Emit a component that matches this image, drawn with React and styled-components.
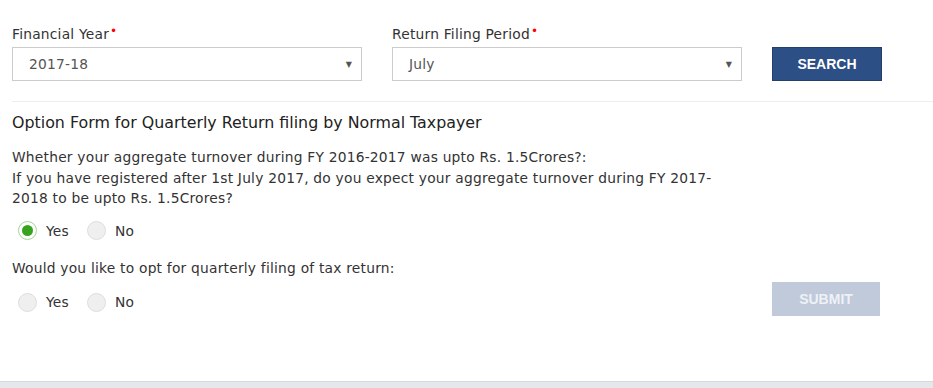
import React from 'react'
import styled, { createGlobalStyle } from 'styled-components'

const GlobalStyle = createGlobalStyle`
  * { box-sizing: border-box; }
  body {
    margin: 0;
    background: #fff;
    font-family: "DejaVu Sans", Verdana, sans-serif;
    color: #333;
  }
`;

const Page = styled.div`
  width: 933px;
  height: 388px;
  display: flex;
  flex-direction: column;
  overflow: hidden;
`;

const Content = styled.div`
  flex: 1;
  padding: 22px 0 0 12px;
`;

const FilterRow = styled.div`
  display: grid;
  grid-template-columns: 350px 350px 110px;
  column-gap: 30px;
  align-items: end;
`;

const Field = styled.div`
  display: flex;
  flex-direction: column;
  gap: 4px;
`;

const Label = styled.label`
  font-size: 13.8px;
  letter-spacing: 0.22px;
  line-height: 18px;
  color: #333;
`;

const Required = styled.span`
  color: #f00;
  font-size: 12px;
  vertical-align: 4px;
  margin-left: 1px;
  &::before { content: "•"; }
`;

const SelectBox = styled.div`
  height: 34px;
  border: 1px solid #ccc;
  display: flex;
  align-items: center;
  justify-content: space-between;
  padding: 0 9px 0 16px;
  font-size: 13.8px;
  letter-spacing: 0.22px;
  color: #555;
  background: #fff;
`;

const Caret = styled.span`
  font-size: 8px;
  color: #555;
`;

const Button = styled.button`
  height: 34px;
  width: ${({ $w }) => $w || 110}px;
  border-radius: 0;
  background: ${({ disabled }) => (disabled ? '#c0cadb' : '#2c4f85')};
  border: 1px solid ${({ disabled }) => (disabled ? '#c0cadb' : '#253f6a')};
  color: ${({ disabled }) => (disabled ? '#eef1f6' : '#fff')};
  font-family: "Liberation Sans", Arial, sans-serif;
  font-weight: bold;
  font-size: 14px;
  cursor: pointer;
`;

const Divider = styled.hr`
  border: none;
  border-top: 1px solid #eee;
  margin: 20px 0 0;
`;

const Body = styled.div`
  display: grid;
  grid-template-columns: 730px 108px;
  column-gap: 30px;
`;

const Title = styled.h4`
  margin: 9px 0 0;
  font-size: 15.85px;
  font-weight: normal;
  line-height: 24px;
  color: #222;
`;

const Question = styled.p`
  margin: ${({ $mt }) => $mt || 12}px 0 0;
  font-size: 13.8px;
  letter-spacing: 0.22px;
  line-height: 20.5px;
  color: #333;
`;

const RadioGroup = styled.div`
  display: flex;
  align-items: center;
  gap: 18px;
  margin-top: ${({ $mt }) => $mt || 10}px;
  padding-left: 6px;
  height: 24px;
`;

const RadioLabel = styled.label`
  display: flex;
  align-items: center;
  gap: 9px;
  font-size: 13.8px;
  letter-spacing: 0.22px;
  color: #333;
`;

const RadioDot = styled.span`
  width: 19px;
  height: 19px;
  border-radius: 50%;
  border: 1px solid ${({ $on }) => ($on ? '#a6d39a' : '#dedede')};
  background: ${({ $on }) => ($on ? '#fff' : '#efefef')};
  display: flex;
  align-items: center;
  justify-content: center;
  &::after {
    content: "";
    width: 11px;
    height: 11px;
    border-radius: 50%;
    background: ${({ $on }) => ($on ? '#36a31f' : 'transparent')};
  }
`;

const Side = styled.div`
  display: flex;
  align-items: flex-end;
`;

const SubmitButton = styled(Button)`
  margin-bottom: -2px;
`;

const Footer = styled.div`
  height: 7px;
  background: #e4e8eb;
  border-top: 1px solid #d6dadd;
`;

const Radio = ({ checked, children }) => (
  <RadioLabel>
    <RadioDot $on={checked} />
    {children}
  </RadioLabel>
)

export default function App() {
  return (
    <Page>
      <GlobalStyle />
      <Content>
        <FilterRow>
          <Field>
            <Label>Financial Year<Required /></Label>
            <SelectBox>2017-18<Caret>▼</Caret></SelectBox>
          </Field>
          <Field>
            <Label>Return Filing Period<Required /></Label>
            <SelectBox>July<Caret>▼</Caret></SelectBox>
          </Field>
          <Button>SEARCH</Button>
        </FilterRow>
        <Divider />
        <Body>
          <div>
            <Title>Option Form for Quarterly Return filing by Normal Taxpayer</Title>
            <Question>
              Whether your aggregate turnover during FY 2016-2017 was upto Rs. 1.5Crores?:<br />
              If you have registered after 1st July 2017, do you expect your aggregate turnover during FY 2017-2018 to be upto Rs. 1.5Crores?
            </Question>
            <RadioGroup>
              <Radio checked>Yes</Radio>
              <Radio>No</Radio>
            </RadioGroup>
            <Question $mt={15}>Would you like to opt for quarterly filing of tax return:</Question>
            <RadioGroup $mt={12}>
              <Radio>Yes</Radio>
              <Radio>No</Radio>
            </RadioGroup>
          </div>
          <Side>
            <SubmitButton disabled $w={108}>SUBMIT</SubmitButton>
          </Side>
        </Body>
      </Content>
      <Footer />
    </Page>
  )
}
